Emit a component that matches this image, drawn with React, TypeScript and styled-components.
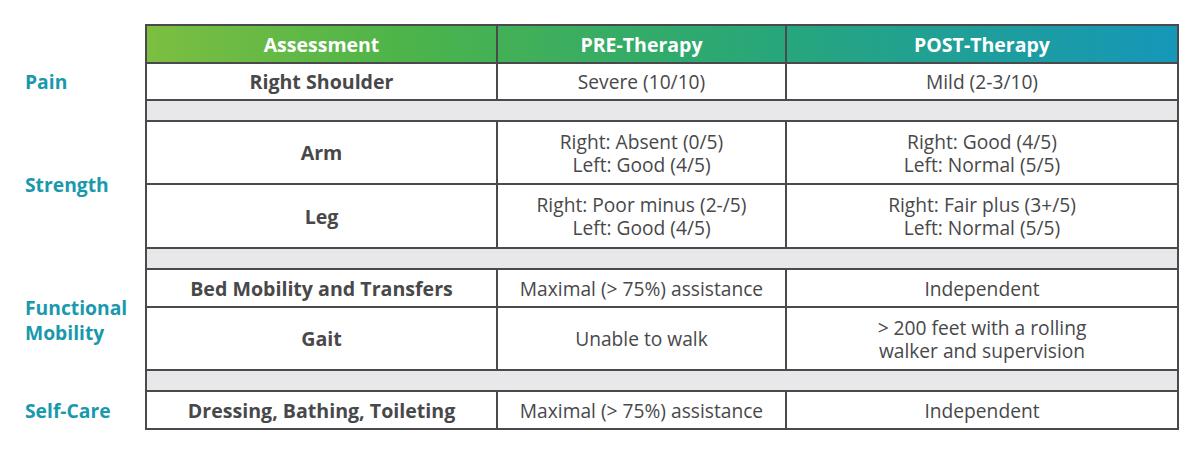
import React from "react";
import styled, { createGlobalStyle } from "styled-components";

const Global = createGlobalStyle`
  html, body { margin: 0; padding: 0; background: #ffffff; }
  body { font-family: "Open Sans", "Noto Sans", "Liberation Sans", sans-serif; }
`;

const Page = styled.div`
  width: 1200px;
  height: 452px;
  padding-top: 24px;
  box-sizing: border-box;
`;

const Table = styled.table`
  border-collapse: collapse;
  table-layout: fixed;
  width: 1179px;
`;

const HeadCell = styled.th`
  height: 36px;
  padding: 0;
  border: 2px solid #4a4a4c;
  color: #ffffff;
  font-size: 19.5px;
  font-weight: 700;
  text-align: center;
  vertical-align: middle;
`;

const HeadRow = styled.tr`
  background: linear-gradient(90deg, #98c53c 0%, #4db449 34%, #2aa874 62%, #1597b9 100%);
`;

const BlankHead = styled.th`
  border: none;
  background: #ffffff;
  padding: 0;
`;

const Label = styled.td`
  border: none;
  padding: 0 0 0 25px;
  color: #1a98ad;
  font-size: 19.3px;
  font-weight: 700;
  line-height: 25px;
  vertical-align: middle;
  text-align: left;
`;

const Cell = styled.td<{ $bold?: boolean; $h: number }>`
  height: ${(p) => p.$h}px;
  padding: 0;
  border: 2px solid #4a4a4c;
  color: #48484a;
  font-size: ${(p) => (p.$bold ? "19.6px" : "19.2px")};
  font-weight: ${(p) => (p.$bold ? 700 : 400)};
  line-height: 23px;
  text-align: center;
  vertical-align: middle;
`;

const Line = styled.div`
  white-space: nowrap;
`;

const Spacer = styled.td`
  height: 19px;
  padding: 0;
  border: 2px solid #4a4a4c;
  background: #e8e8ea;
`;

type Row = { a: string; pre: string[]; post: string[]; h: number };

const Data = ({ r }: { r: Row }) => (
  <>
    <Cell $bold $h={r.h}>{r.a}</Cell>
    <Cell $h={r.h}>
      {r.pre.map((l, i) => (
        <Line key={i}>{l}</Line>
      ))}
    </Cell>
    <Cell $h={r.h}>
      {r.post.map((l, i) => (
        <Line key={i}>{l}</Line>
      ))}
    </Cell>
  </>
);

export default function App() {
  return (
    <>
      <Global />
      <Page>
        <Table>
          <colgroup>
            <col style={{ width: 146 }} />
            <col style={{ width: 351 }} />
            <col style={{ width: 289 }} />
            <col style={{ width: 392 }} />
          </colgroup>
          <thead>
            <HeadRow>
              <BlankHead />
              <HeadCell>Assessment</HeadCell>
              <HeadCell>PRE-Therapy</HeadCell>
              <HeadCell>POST-Therapy</HeadCell>
            </HeadRow>
          </thead>
          <tbody>
            <tr>
              <Label>Pain</Label>
              <Data r={{ a: "Right Shoulder", pre: ["Severe (10/10)"], post: ["Mild (2-3/10)"], h: 35 }} />
            </tr>
            <tr>
              <Label />
              <Spacer colSpan={3} />
            </tr>
            <tr>
              <Label rowSpan={2}>Strength</Label>
              <Data
                r={{
                  a: "Arm",
                  pre: ["Right: Absent (0/5)", "Left: Good (4/5)"],
                  post: ["Right: Good (4/5)", "Left: Normal (5/5)"],
                  h: 61,
                }}
              />
            </tr>
            <tr>
              <Data
                r={{
                  a: "Leg",
                  pre: ["Right: Poor minus (2-/5)", "Left: Good (4/5)"],
                  post: ["Right: Fair plus (3+/5)", "Left: Normal (5/5)"],
                  h: 62,
                }}
              />
            </tr>
            <tr>
              <Label />
              <Spacer colSpan={3} />
            </tr>
            <tr>
              <Label rowSpan={2}>
                Functional
                <br />
                Mobility
              </Label>
              <Data
                r={{
                  a: "Bed Mobility and Transfers",
                  pre: ["Maximal (> 75%) assistance"],
                  post: ["Independent"],
                  h: 36,
                }}
              />
            </tr>
            <tr>
              <Data
                r={{
                  a: "Gait",
                  pre: ["Unable to walk"],
                  post: ["> 200 feet with a rolling", "walker and supervision"],
                  h: 61,
                }}
              />
            </tr>
            <tr>
              <Label />
              <Spacer colSpan={3} />
            </tr>
            <tr>
              <Label>Self-Care</Label>
              <Data
                r={{
                  a: "Dressing, Bathing, Toileting",
                  pre: ["Maximal (> 75%) assistance"],
                  post: ["Independent"],
                  h: 36,
                }}
              />
            </tr>
          </tbody>
        </Table>
      </Page>
    </>
  );
}
